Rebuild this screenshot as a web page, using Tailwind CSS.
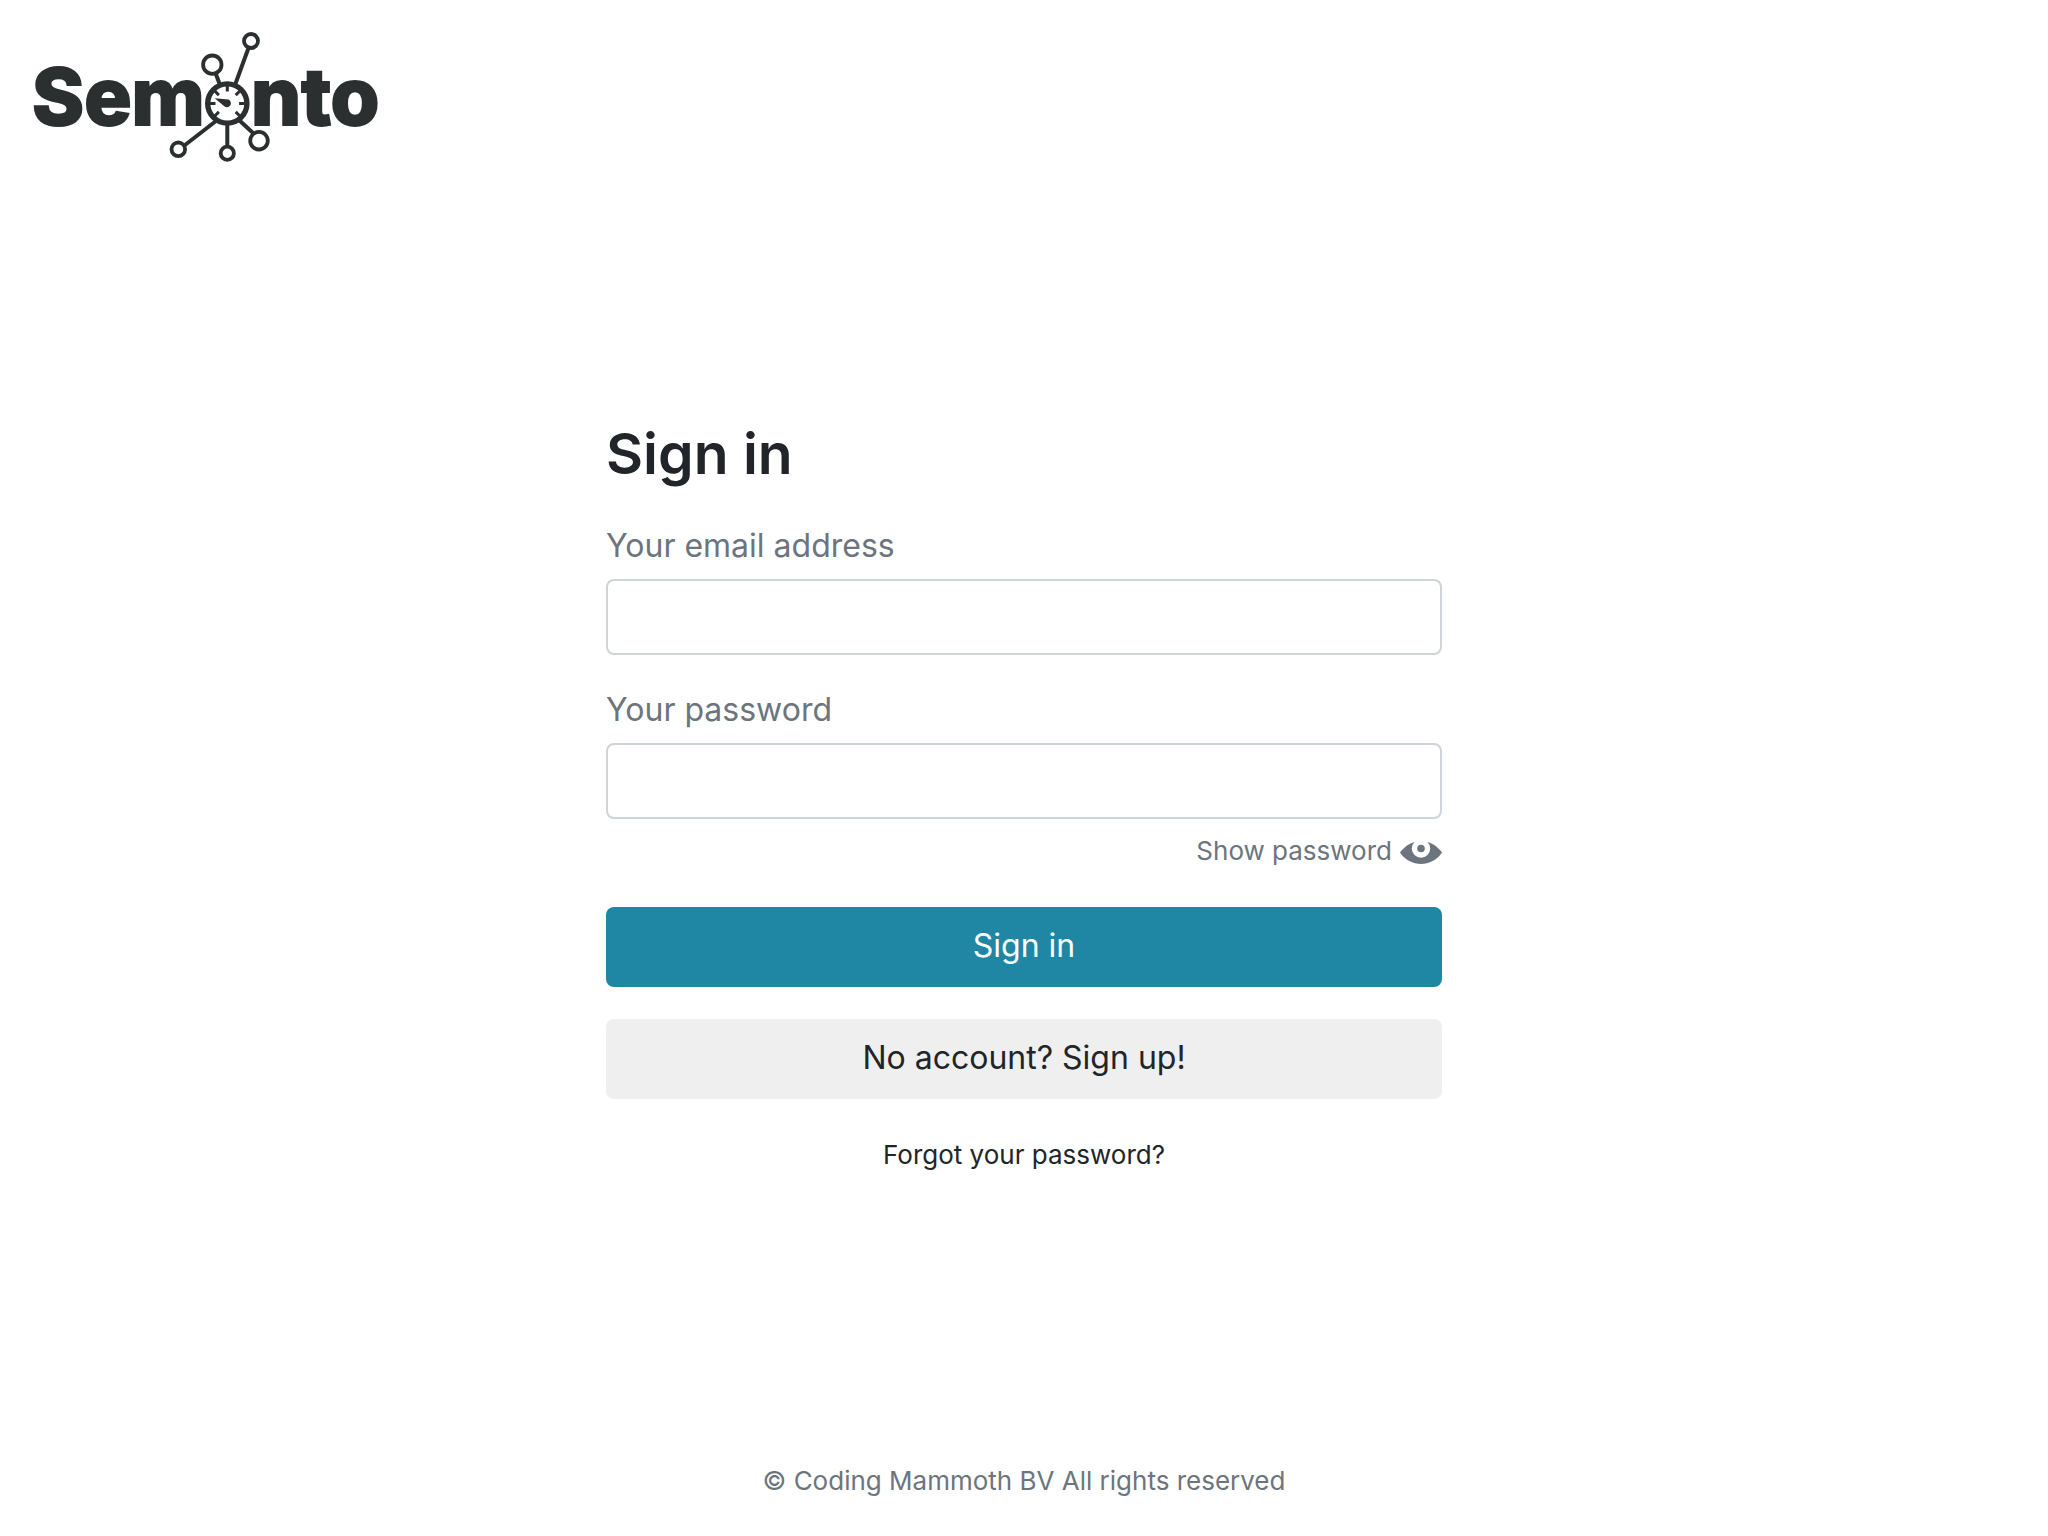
<!DOCTYPE html>
<html lang="en">
  <head>
    <meta charset="UTF-8" />
    <meta name="viewport" content="width=device-width, initial-scale=1.0" />
    <title>Sign in - Semonto</title>
    <script src="https://cdn.jsdelivr.net/npm/@tailwindcss/browser@4"></script>
  </head>

  <body class="min-h-screen flex flex-col bg-white text-[#212529] font-['Inter',sans-serif]">
    <header class="p-8">
      <a href="#" class="inline-block align-top" aria-label="Semonto">
        <svg class="block overflow-visible" width="356" height="130" viewBox="0 0 356 130" fill="none" stroke="#2b2f30">
          <g fill="#2b2f30" stroke-width="2" font-family="Inter, sans-serif" font-weight="800" font-size="79">
            <text x="0" y="93">Sem</text>
            <text x="219" y="93">nto</text>
          </g>
          <!-- spokes -->
          <path stroke-width="4" d="M183.5 41 188 53M216.500 16 203 53M153 113 184 89M195.300 90V114M207 88 221 101" />
          <g stroke-width="3.800" fill="#fff">
            <circle cx="219" cy="9" r="7" />
            <circle cx="146.300" cy="117.300" r="6.800" />
            <circle cx="195.300" cy="121.300" r="6.600" />
            <circle cx="180.300" cy="32.700" r="9.200" />
            <circle cx="227" cy="108.700" r="8.800" />
          </g>
          <!-- gauge -->
          <circle cx="195.300" cy="71.500" r="19.600" stroke-width="5.400" fill="#fff" />
          <path stroke-width="3" d="M195.300 54V59.500M178 71.500H183.500M212.600 71.500H207.100M183 59.200 186.900 63.100M207.600 59.200 203.700 63.100M183 83.800 186.900 79.900M207.600 83.800 203.700 79.900" />
          <path fill="#2b2f30" stroke="none" d="M182.700 66.300 196.500 67.600A4 4 0 1 1 192 74Z" />
        </svg>
      </a>
    </header>

    <main class="flex-1 px-8 pt-[228px] pb-8">
      <form id="signinForm" class="w-full max-w-[836px] mx-auto">
        <h1 class="text-[57px] leading-[64px] font-semibold">Sign in</h1>

        <label for="email" class="block mt-9 text-[32px] leading-12 text-[#6c757d]">Your email address</label>
        <input
          id="email"
          type="email"
          class="block w-full h-[76px] mt-[9px] px-6 text-[32px] bg-white border-2 border-[#ced4da] rounded-lg"
        />

        <label for="password" class="block mt-[31px] text-[32px] leading-12 text-[#6c757d]">Your password</label>
        <input
          id="password"
          type="password"
          class="block w-full h-[76px] mt-[9px] px-6 text-[32px] bg-white border-2 border-[#ced4da] rounded-lg"
        />

        <button
          id="toggle"
          type="button"
          class="flex items-center gap-2 mt-3 ml-auto text-[26px] leading-10 text-[#6c757d]"
        >
          Show password
          <svg class="mt-1" width="42" height="22" viewBox="0 0 42 22">
            <path fill="#6c757d" d="M0 10.500C4 5 10 1 15 0H27C32 1 38 5 42 10.500C37 18 29 22 21 22C13 22 5 18 0 10.500Z" />
            <circle cx="21" cy="6.500" r="9.200" fill="#fff" />
            <circle cx="21" cy="6.500" r="3.800" fill="#6c757d" />
          </svg>
        </button>

        <button type="submit" class="block w-full h-20 mt-9 pb-0.5 text-[32px] rounded-lg bg-[#1f86a4] text-white">
          Sign in
        </button>
        <button type="button" class="block w-full h-20 mt-8 pb-0.5 text-[32px] rounded-lg bg-[#efefef]">
          No account? Sign up!
        </button>

        <p class="mt-9 text-center text-[26px] leading-10"><a href="#">Forgot your password?</a></p>
      </form>
    </main>

    <footer class="pb-[35px] text-center text-[26px] leading-10 text-[#6c757d]">
      &copy; Coding Mammoth BV All rights reserved
    </footer>

    <script>
      document.getElementById("toggle").addEventListener("click", function () {
        var password = document.getElementById("password");
        password.type = password.type === "password" ? "text" : "password";
      });
    </script>
  </body>
</html>
